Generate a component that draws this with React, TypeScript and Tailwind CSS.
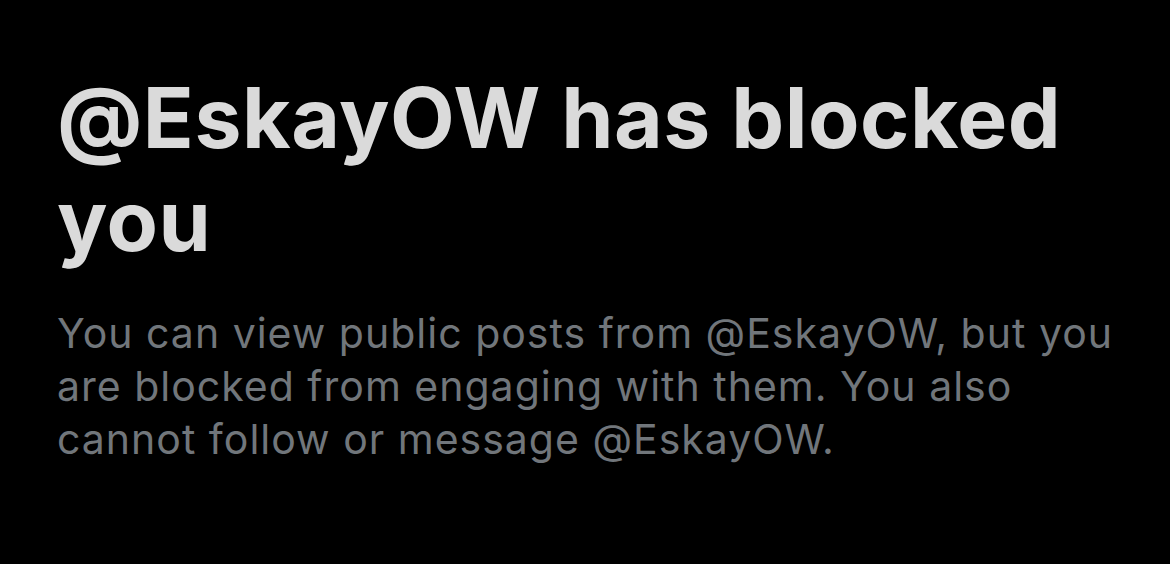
export default function App() {
  return (
    <div className="w-[1170px] h-[564px] bg-black overflow-hidden pl-[57px] pt-[66px]" style={{ fontFamily: "Inter, 'Noto Sans', sans-serif" }}>
      <h1 className="text-[84px] leading-[103px] font-bold tracking-[0.5px] text-[#dadada] whitespace-nowrap">
        @EskayOW has blocked
        <br />
        you
      </h1>
      <p className="mt-[35px] text-[41px] leading-[53px] tracking-[1px] text-[#71767b] whitespace-nowrap">
        You can view public posts from @EskayOW, but you
        <br />
        are blocked from engaging with them. You also
        <br />
        cannot follow or message @EskayOW.
      </p>
    </div>
  );
}
